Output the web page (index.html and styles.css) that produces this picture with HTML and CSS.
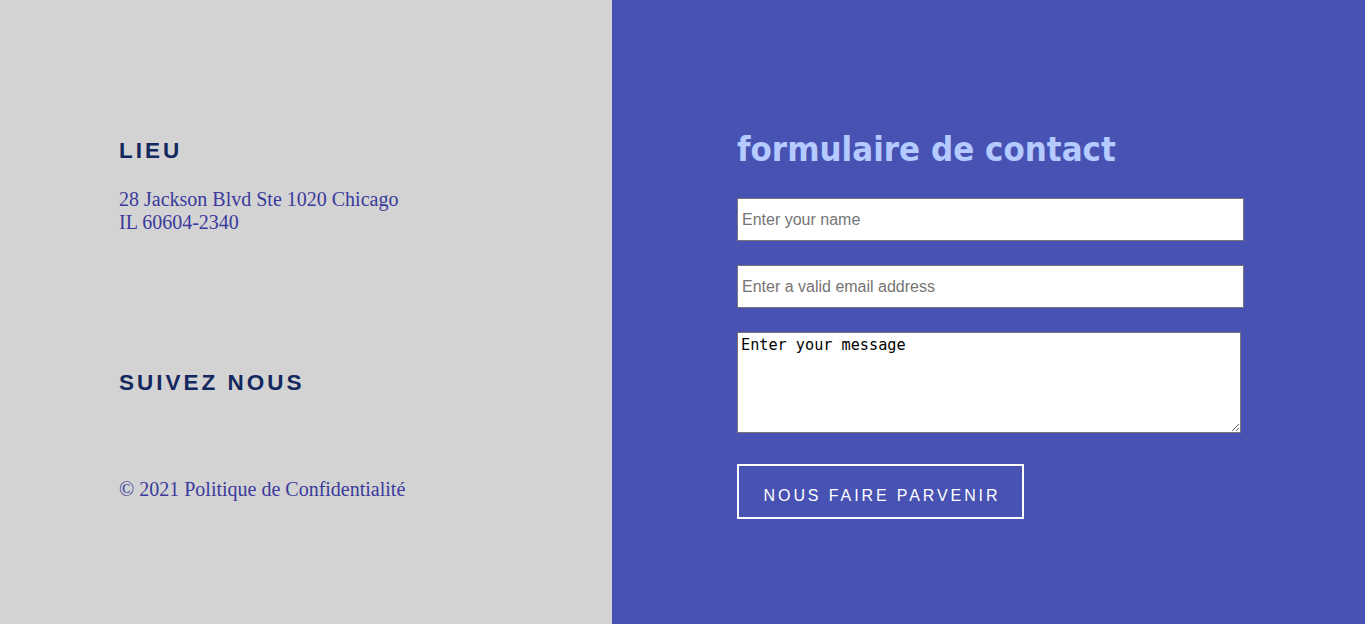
FILE: index.html
```html
<!DOCTYPE html>
<html lang="fr">
<head>
<meta charset="utf-8">
<title>Contact</title>
<link rel="stylesheet" href="styles.css">
</head>
<body>
<div class="page">
  <section class="info">
    <h2 class="info-title">LIEU</h2>
    <p class="address">28 Jackson Blvd Ste 1020 Chicago<br>IL 60604-2340</p>
    <h2 class="info-title follow">SUIVEZ NOUS</h2>
    <p class="copy">© 2021 Politique de Confidentialité</p>
  </section>
  <section class="contact">
    <h1 class="contact-title">formulaire de contact</h1>
    <form class="form">
      <input class="field" type="text" placeholder="Enter your name">
      <input class="field" type="email" placeholder="Enter a valid email address">
      <textarea class="message">Enter your message</textarea>
      <button class="submit" type="button">NOUS FAIRE PARVENIR</button>
    </form>
  </section>
</div>
</body>
</html>
```
FILE: styles.css
```css
html, body {
  margin: 0;
  padding: 0;
  height: 100%;
}
.page {
  display: grid;
  grid-template-columns: 612px 1fr;
  height: 624px;
}
.info {
  background: #d3d3d3;
  padding: 137px 0 0 119px;
}
.info-title {
  margin: 0;
  font-family: "Liberation Sans", Arial, sans-serif;
  font-weight: bold;
  font-size: 22.5px;
  line-height: 28px;
  letter-spacing: 3px;
  color: #13285e;
}
.follow {
  margin-top: 135px;
}
.address {
  margin: 23px 0 0;
  font-family: "Liberation Serif", "Times New Roman", serif;
  font-size: 20px;
  line-height: 23px;
  color: #3a3a9c;
}
.copy {
  margin: 81px 0 0;
  font-family: "Liberation Serif", "Times New Roman", serif;
  font-size: 20px;
  line-height: 23px;
  color: #3a3a9c;
}
.contact {
  background: #4752b3;
  padding: 126px 0 0 125px;
}
.contact-title {
  margin: 0;
  font-family: "DejaVu Sans", "Liberation Sans", sans-serif;
  font-stretch: condensed;
  font-weight: bold;
  font-size: 34.5px;
  line-height: 46px;
  color: #b5caff;
}
.form {
  display: flex;
  flex-direction: column;
  align-items: flex-start;
  margin-top: 26px;
}
.field {
  box-sizing: border-box;
  width: 507px;
  height: 43px;
  margin: 0 0 24px;
  padding: 0 4px;
  border: 1px solid #767676;
  background: #fff;
  font-family: "Liberation Sans", Arial, sans-serif;
  font-size: 16px;
  color: #000;
  outline: none;
}
.field::placeholder {
  color: #757575;
}
.message {
  box-sizing: border-box;
  width: 504px;
  height: 101px;
  margin: 0;
  padding: 3px 3px;
  border: 1px solid #767676;
  background: #fff;
  font-family: "DejaVu Sans Mono", "Liberation Mono", monospace;
  font-size: 15.2px;
  color: #000;
}
.submit {
  box-sizing: border-box;
  width: 287px;
  height: 55px;
  margin-top: 31px;
  border: 2px solid #fff;
  background: transparent;
  color: #fff;
  font-family: "Liberation Sans", Arial, sans-serif;
  font-size: 16px;
  letter-spacing: 2.9px;
  padding: 8px 0 0 3px;
}
```
